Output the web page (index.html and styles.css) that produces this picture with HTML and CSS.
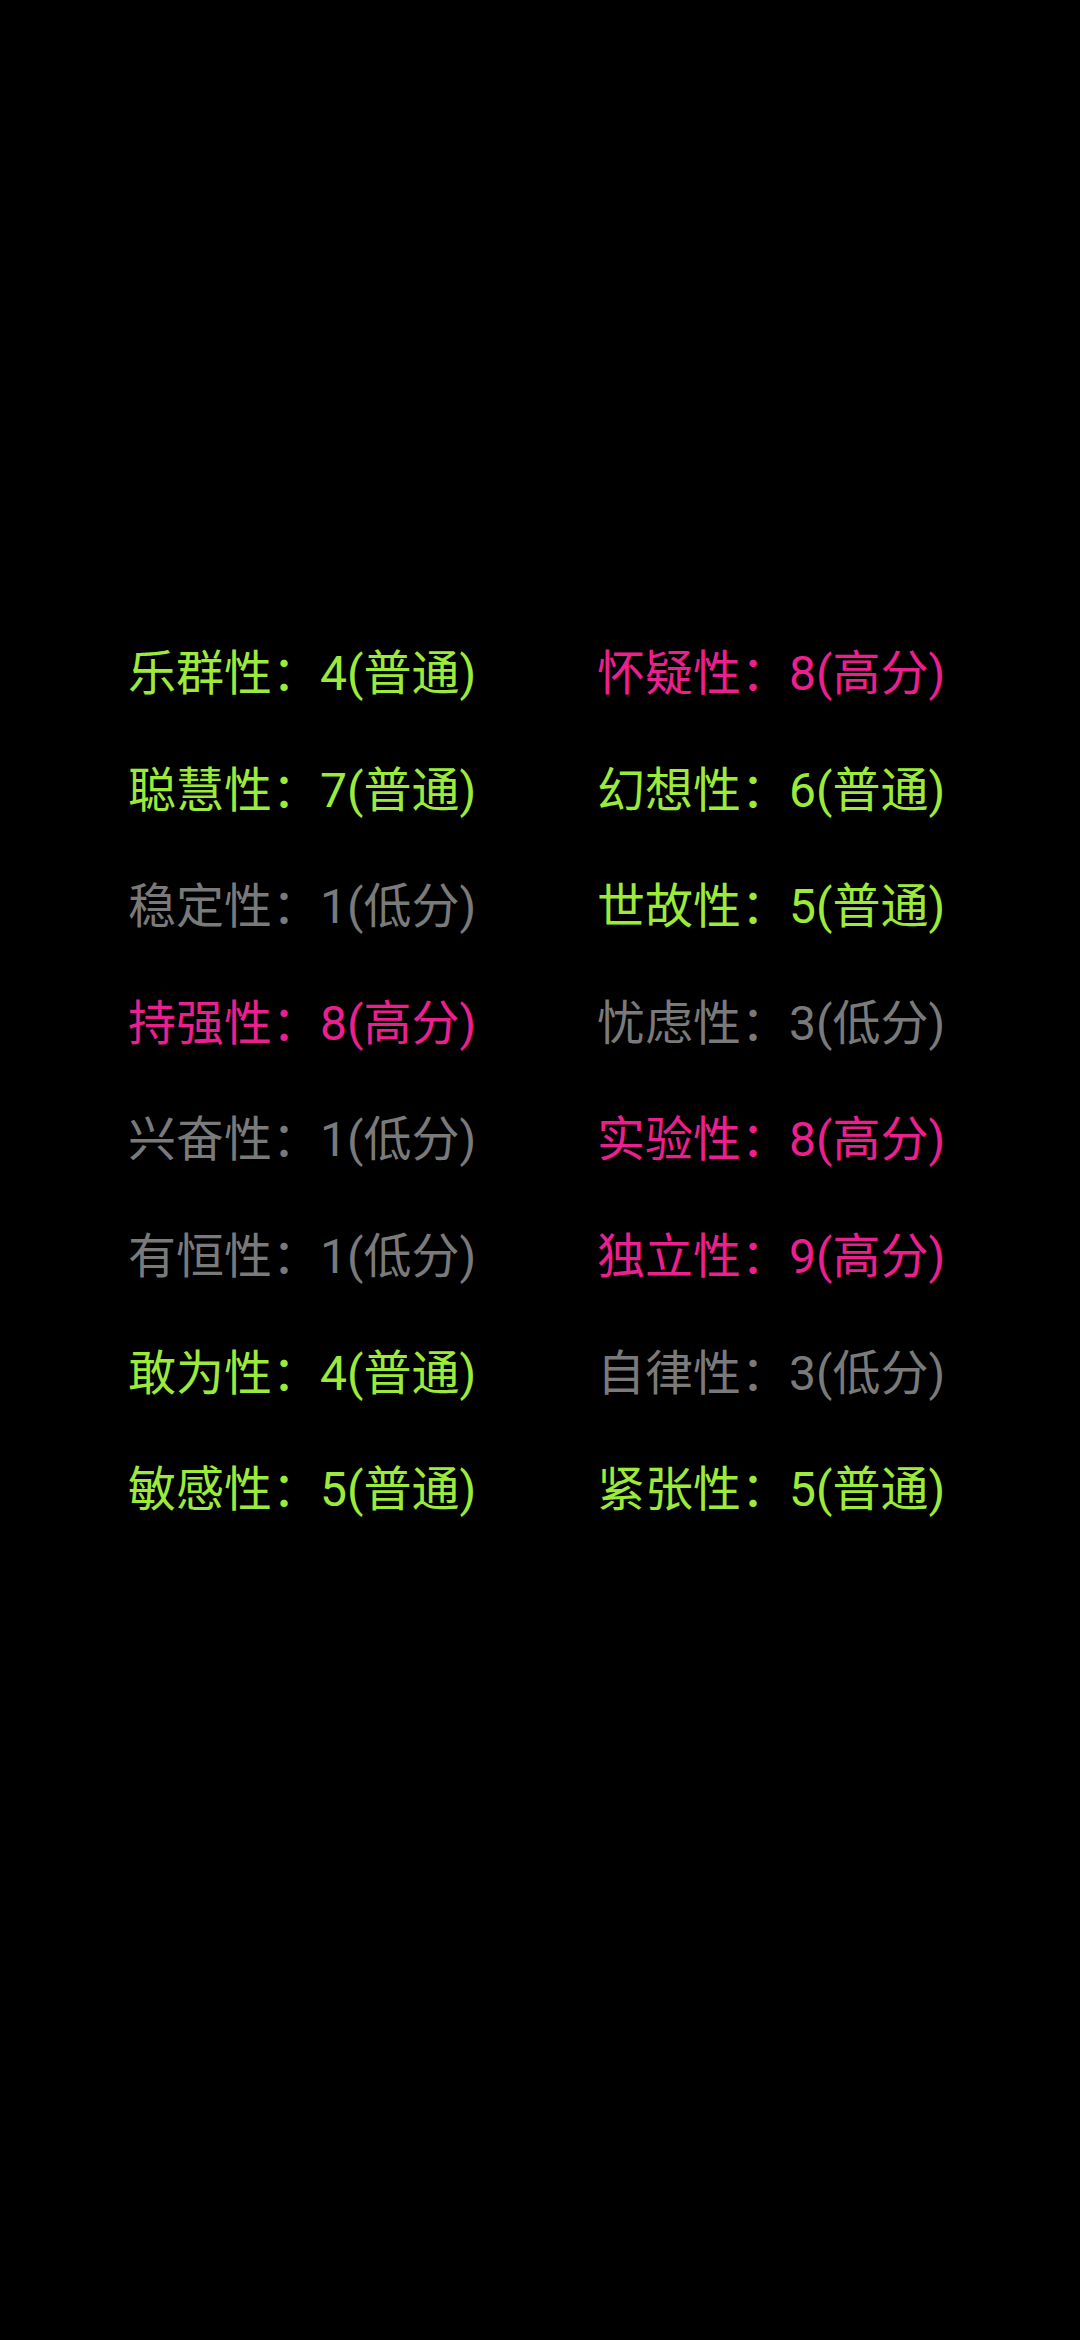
FILE: index.html
```html
<!DOCTYPE html>
<html lang="zh">
<head>
<meta charset="utf-8">
<link rel="stylesheet" href="styles.css">
</head>
<body>
<div class="grid">
  <div class="item mid">乐群性<span class="colon">：</span>4(普通)</div>
  <div class="item high">怀疑性<span class="colon">：</span>8(高分)</div>
  <div class="item mid">聪慧性<span class="colon">：</span>7(普通)</div>
  <div class="item mid">幻想性<span class="colon">：</span>6(普通)</div>
  <div class="item low">稳定性<span class="colon">：</span>1(低分)</div>
  <div class="item mid">世故性<span class="colon">：</span>5(普通)</div>
  <div class="item high">持强性<span class="colon">：</span>8(高分)</div>
  <div class="item low">忧虑性<span class="colon">：</span>3(低分)</div>
  <div class="item low">兴奋性<span class="colon">：</span>1(低分)</div>
  <div class="item high">实验性<span class="colon">：</span>8(高分)</div>
  <div class="item low">有恒性<span class="colon">：</span>1(低分)</div>
  <div class="item high">独立性<span class="colon">：</span>9(高分)</div>
  <div class="item mid">敢为性<span class="colon">：</span>4(普通)</div>
  <div class="item low">自律性<span class="colon">：</span>3(低分)</div>
  <div class="item mid">敏感性<span class="colon">：</span>5(普通)</div>
  <div class="item mid">紧张性<span class="colon">：</span>5(普通)</div>
</div>
</body>
</html>
```

FILE: styles.css
```css
html, body {
  margin: 0;
  padding: 0;
  background: #000;
}
body {
  width: 1080px;
  height: 2340px;
  font-family: Roboto, "Noto Sans CJK SC", sans-serif;
}
.grid {
  display: grid;
  grid-template-columns: 469px auto;
  grid-auto-rows: 116.6px;
  padding-top: 611px;
  padding-left: 128px;
}
.item {
  font-size: 48px;
  line-height: 116.6px;
  white-space: nowrap;
}
.colon {
  font-family: "Noto Sans CJK JP", "Noto Sans CJK TC", sans-serif;
}
.mid { color: #9ceb3a; }
.high { color: #ec1f8e; }
.low { color: #7a7a7a; }
```
